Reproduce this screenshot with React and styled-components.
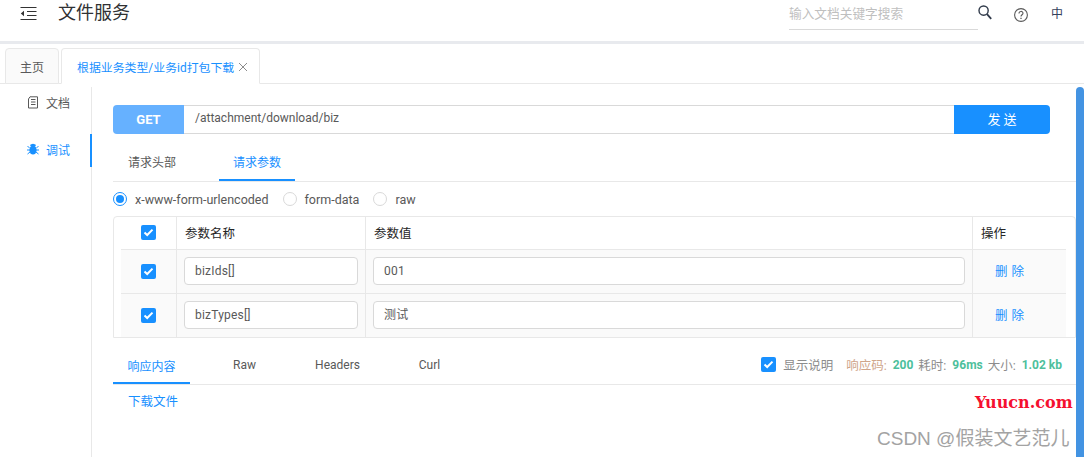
import React from 'react';
import styled, { createGlobalStyle } from 'styled-components';

const GlobalStyle = createGlobalStyle`
  html, body {
    margin: 0;
    padding: 0;
    overflow: hidden;
    background: #fff;
  }
  body {
    font-family: Roboto, "Noto Sans CJK SC", sans-serif;
    font-size: 12px;
    color: #595959;
  }
  * { box-sizing: border-box; }
`;

const Page = styled.div`
  position: relative;
  width: 1084px;
  height: 457px;
  overflow: hidden;
`;

const Header = styled.header`
  height: 44px;
  display: flex;
  align-items: flex-start;
  border-bottom: 3px solid #e8eaee;
`;

const MenuButton = styled.div`
  width: 58px;
  height: 28px;
  padding: 6px 0 0 20px;
  color: #333;
`;

const AppTitle = styled.div`
  flex: 1;
  font-size: 18px;
  line-height: 26px;
  color: #303133;
`;

const SearchBox = styled.div`
  width: 189px;
  height: 30px;
  border-bottom: 1px solid #d9d9d9;
  font-size: 12.7px;
  line-height: 28px;
  color: #bfbfbf;
`;

const IconSlot = styled.div`
  width: ${props => props.$width}px;
  padding-top: ${props => props.$top}px;
  color: #303a4a;
`;

const LangSwitch = styled.div`
  width: 33px;
  padding: 5px 0 0 0;
  font-size: 12px;
  line-height: 18px;
  color: #33415c;
`;

const TabStrip = styled.div`
  height: 40px;
  padding: 4px 0 0 5px;
  display: flex;
  gap: 2px;
  border-bottom: 1px solid #e8e8e8;
`;

const PageTab = styled.div`
  height: 36px;
  padding: 0 ${props => (props.$active ? 11 : 14)}px 0 ${props => (props.$active ? 15 : 14)}px;
  display: flex;
  align-items: center;
  font-size: ${props => (props.$active ? 11.9 : 12)}px;
  border: 1px solid #e8e8e8;
  border-radius: 4px 4px 0 0;
  background: ${props => (props.$active ? '#fff' : '#fafafa')};
  color: ${props => (props.$active ? '#1890ff' : '#595959')};
  margin-bottom: -1px;
  border-bottom-color: ${props => (props.$active ? '#fff' : '#e8e8e8')};
`;

const CloseMark = styled.span`
  display: flex;
  margin: 2px 0 0 4px;
  color: #8c8c8c;
`;

const Body = styled.div`
  display: flex;
  height: 373px;
`;

const Sider = styled.nav`
  width: 92px;
  margin-top: 3px;
  border-right: 1px solid #e8e8e8;
  flex: none;
`;

const SideItem = styled.div`
  height: 33px;
  margin-bottom: 14px;
  margin-right: -1px;
  padding: 0 0 3px 27px;
  display: flex;
  align-items: center;
  gap: 7px;
  font-size: 12px;
  color: ${props => (props.$active ? '#1890ff' : '#595959')};
  border-right: 2px solid ${props => (props.$active ? '#1890ff' : 'transparent')};
`;

const Content = styled.main`
  width: 984px;
  padding: 21px 0 0 21px;
  flex: none;
`;

const UrlBar = styled.div`
  width: 937px;
  height: 29px;
  display: flex;
  font-size: 12px;
`;

const MethodBox = styled.div`
  width: 71px;
  background: #66b1ff;
  color: #fff;
  font-weight: 700;
  font-size: 13px;
  border-radius: 4px 0 0 4px;
  display: flex;
  align-items: center;
  justify-content: center;
`;

const UrlInput = styled.div`
  flex: 1;
  padding-left: 11px;
  line-height: 25px;
  font-size: 12px;
  color: #595959;
  border-top: 1px solid #d9d9d9;
  border-bottom: 1px solid #d9d9d9;
`;

const SendButton = styled.div`
  width: 96px;
  padding: 0 0 2px 3px;
  background: #1890ff;
  color: #fff;
  font-size: 13px;
  letter-spacing: 3px;
  border-radius: 0 4px 4px 0;
  display: flex;
  align-items: center;
  justify-content: center;
`;

const TabRow = styled.div`
  display: flex;
  height: 33px;
  margin-top: 15px;
  width: 963px;
  border-bottom: 1px solid #e8e8e8;
`;

const TabItem = styled.div`
  width: ${props => props.$width}px;
  margin-left: ${props => props.$gap || 0}px;
  padding-bottom: ${props => props.$lift}px;
  height: 100%;
  display: flex;
  align-items: center;
  justify-content: center;
  font-size: 12px;
  margin-bottom: -1px;
  color: ${props => (props.$active ? '#1890ff' : '#595959')};
  border-bottom: 2px solid ${props => (props.$active ? '#1890ff' : 'transparent')};
`;

const RadioRow = styled.div`
  display: flex;
  align-items: center;
  height: 18px;
  margin-top: 8px;
  gap: 14px;
`;

const RadioLabel = styled.label`
  display: flex;
  align-items: center;
  gap: 8px;
  font-size: 12.5px;
  color: #595959;
`;

const RadioDot = styled.span`
  width: 14px;
  height: 14px;
  border-radius: 50%;
  border: 1px solid ${props => (props.$checked ? '#1890ff' : '#d9d9d9')};
  display: flex;
  align-items: center;
  justify-content: center;

  &::after {
    content: '';
    width: 8px;
    height: 8px;
    border-radius: 50%;
    background: ${props => (props.$checked ? '#1890ff' : 'transparent')};
  }
`;

const ParamTable = styled.div`
  width: 963px;
  height: 122px;
  margin-top: 8px;
  border: 1px solid #e8e8e8;
  border-radius: 4px 4px 0 0;
`;

const TableRow = styled.div`
  display: grid;
  grid-template-columns: 56px 189px 607px 93px;
  width: 945px;
  margin-left: 7px;
  height: ${props => (props.$head ? 33 : props.$last ? 43 : 44)}px;
  border-bottom: ${props => (props.$last ? 'none' : '1px solid #e8e8e8')};
  background: ${props => (props.$head ? '#fff' : '#fafafa')};
`;

const Cell = styled.div`
  display: flex;
  align-items: center;
  justify-content: ${props => (props.$center ? 'center' : 'flex-start')};
  padding: 0 0 1px 7px;
  border-right: ${props => (props.$end ? 'none' : '1px solid #e8e8e8')};
`;

const CheckCell = styled(Cell)`
  padding-left: 0;
`;

const HeadText = styled.span`
  padding: 0 0 1px 1px;
  font-size: 12.5px;
  color: #262626;
`;

const ParamInput = styled.div`
  width: ${props => props.$width}px;
  height: 28px;
  padding-left: 10px;
  line-height: 26px;
  font-size: 12px;
  letter-spacing: 0.2px;
  color: #595959;
  background: #fff;
  border: 1px solid #d9d9d9;
  border-radius: 4px;
`;

const DeleteLink = styled.span`
  margin-left: 15px;
  padding-bottom: 1px;
  color: #1890ff;
  font-size: 12.5px;
  letter-spacing: 4px;
`;

const Check = styled.span`
  width: 15px;
  height: 15px;
  border-radius: 2px;
  background: #1890ff;
  display: flex;
  align-items: center;
  justify-content: center;
`;

const ResponseBar = styled.div`
  display: flex;
  justify-content: space-between;
  width: 963px;
  height: 35px;
  margin-top: 12px;
  border-bottom: 1px solid #e8e8e8;
`;

const ResponseTabs = styled.div`
  display: flex;
  height: 100%;
`;

const ResponseMeta = styled.div`
  display: flex;
  align-items: center;
  padding: 0 14px 5px 0;
  font-size: 12.5px;
  color: #8c8c8c;
`;

const ShowNote = styled.span`
  margin: 0 13px 0 7px;
  color: #8c8c8c;
`;

const MetaLabel = styled.span`
  color: ${props => (props.$warm ? '#cfa58a' : '#8c8c8c')};
  margin-right: 6px;
`;

const MetaValue = styled.b`
  color: #4dbf9c;
  font-size: 12px;
  font-weight: 700;
  margin-right: 5px;

  &:last-child {
    margin-right: 0;
  }
`;

const DownloadLink = styled.div`
  margin: 8px 0 0 15px;
  font-size: 12.5px;
  line-height: 18px;
  color: #1890ff;
`;

const Scrollbar = styled.div`
  position: absolute;
  top: 87px;
  right: 0;
  width: 8px;
  height: 370px;
  border-radius: 4px 4px 0 0;
  background: #4393e2;
`;

const SiteMark = styled.div`
  position: absolute;
  left: 975px;
  top: 393px;
  font-family: "DejaVu Serif", "Liberation Serif", serif;
  font-size: 16px;
  font-weight: 700;
  color: #f5102f;
  white-space: nowrap;
`;

const CsdnMark = styled.div`
  position: absolute;
  left: 877px;
  top: 428px;
  font-family: "Liberation Sans", "Noto Sans CJK SC", sans-serif;
  font-size: 19px;
  line-height: 22px;
  color: #a3a3a3;
  white-space: nowrap;
`;

const Tick = () => (
  <Check>
    <svg width="11" height="9" viewBox="0 0 11 9" fill="none">
      <path d="M1.5 4.5 L4.2 7 L9.5 1.6" stroke="#fff" strokeWidth="2" />
    </svg>
  </Check>
);

const params = [
  { name: 'bizIds[]', value: '001' },
  { name: 'bizTypes[]', value: '测试' },
];

export default function App() {
  return (
    <Page>
      <GlobalStyle />
      <Header>
        <MenuButton>
          <svg width="17" height="15" viewBox="0 0 17 15" fill="none" stroke="currentColor" strokeWidth="1.2">
            <path d="M0.5 1.5 H16.5 M7 5.5 H16.5 M7 9.5 H16.5 M0.5 13.5 H16.5" />
            <path d="M4 4.8 L0.8 7.5 L4 10.2 Z" fill="currentColor" stroke="none" />
          </svg>
        </MenuButton>
        <AppTitle>文件服务</AppTitle>
        <SearchBox>输入文档关键字搜索</SearchBox>
        <IconSlot $width={36} $top={5}>
          <svg width="14" height="15" viewBox="0 0 14 15" fill="none" stroke="currentColor" strokeWidth="1.4">
            <circle cx="5.6" cy="5.6" r="4.6" />
            <path d="M9 9.2 L13.2 13.8" strokeWidth="1.8" />
          </svg>
        </IconSlot>
        <IconSlot $width={37} $top={8}>
          <svg width="14" height="14" viewBox="0 0 14 14" fill="none" stroke="#595959" strokeWidth="1.1">
            <circle cx="7" cy="7" r="6.4" />
            <path d="M5 5.4 C5 2.8 9 2.8 9 5.2 C9 6.8 7 6.8 7 8.6" />
            <path d="M7 9.8 V11" strokeWidth="1.3" />
          </svg>
        </IconSlot>
        <LangSwitch>中</LangSwitch>
      </Header>

      <TabStrip>
        <PageTab>主页</PageTab>
        <PageTab $active>
          根据业务类型/业务id打包下载
          <CloseMark>
            <svg width="10" height="10" viewBox="0 0 10 10" stroke="currentColor" strokeWidth="1">
              <path d="M1 1 L9 9 M9 1 L1 9" />
            </svg>
          </CloseMark>
        </PageTab>
      </TabStrip>

      <Body>
        <Sider>
          <SideItem>
            <svg width="12" height="13" viewBox="0 0 12 13" fill="none" stroke="#595959" strokeWidth="1">
              <path d="M3 0.8 H10.5 V12 H1.5 V3 L3 0.8 M4 3.5 H8.5 M4 6 H8.5 M4 8.5 H8.5" />
            </svg>
            文档
          </SideItem>
          <SideItem $active>
            <svg width="12" height="12" viewBox="0 0 12 12" fill="#1890ff">
              <ellipse cx="6" cy="7" rx="3.6" ry="4.6" />
              <path d="M3.5 1.5 L6 0.8 L8.5 1.5 L8.8 3 H3.2 Z" />
              <path d="M0.5 3 L2.5 5 M11.5 3 L9.5 5 M0 7 H3 M12 7 H9 M0.5 11 L3 9 M11.5 11 L9 9" stroke="#1890ff" strokeWidth="1" />
            </svg>
            调试
          </SideItem>
        </Sider>

        <Content>
          <UrlBar>
            <MethodBox>GET</MethodBox>
            <UrlInput>/attachment/download/biz</UrlInput>
            <SendButton>发送</SendButton>
          </UrlBar>

          <TabRow>
            <TabItem $width={78} $lift={6}>请求头部</TabItem>
            <TabItem $width={76} $gap={28} $lift={6} $active>请求参数</TabItem>
          </TabRow>

          <RadioRow>
            <RadioLabel><RadioDot $checked />x-www-form-urlencoded</RadioLabel>
            <RadioLabel><RadioDot />form-data</RadioLabel>
            <RadioLabel><RadioDot />raw</RadioLabel>
          </RadioRow>

          <ParamTable>
            <TableRow $head>
              <CheckCell $center><Tick /></CheckCell>
              <Cell><HeadText>参数名称</HeadText></Cell>
              <Cell><HeadText>参数值</HeadText></Cell>
              <Cell $end><HeadText>操作</HeadText></Cell>
            </TableRow>
            {params.map((param, index) => (
              <TableRow key={param.name} $last={index === params.length - 1}>
                <CheckCell $center><Tick /></CheckCell>
                <Cell><ParamInput $width={174}>{param.name}</ParamInput></Cell>
                <Cell><ParamInput $width={592}>{param.value}</ParamInput></Cell>
                <Cell $end><DeleteLink>删除</DeleteLink></Cell>
              </TableRow>
            ))}
          </ParamTable>

          <ResponseBar>
            <ResponseTabs>
              <TabItem $width={77} $lift={2} $active>响应内容</TabItem>
              <TabItem $width={77} $gap={16} $lift={2}>Raw</TabItem>
              <TabItem $width={77} $gap={16} $lift={2}>Headers</TabItem>
              <TabItem $width={77} $gap={15} $lift={2}>Curl</TabItem>
            </ResponseTabs>
            <ResponseMeta>
              <Tick />
              <ShowNote>显示说明</ShowNote>
              <MetaLabel $warm>响应码:</MetaLabel>
              <MetaValue>200</MetaValue>
              <MetaLabel>耗时:</MetaLabel>
              <MetaValue>96ms</MetaValue>
              <MetaLabel>大小:</MetaLabel>
              <MetaValue>1.02 kb</MetaValue>
            </ResponseMeta>
          </ResponseBar>

          <DownloadLink>下载文件</DownloadLink>
        </Content>
      </Body>

      <Scrollbar />
      <SiteMark>Yuucn.com</SiteMark>
      <CsdnMark>CSDN @假装文艺范儿</CsdnMark>
    </Page>
  );
}
